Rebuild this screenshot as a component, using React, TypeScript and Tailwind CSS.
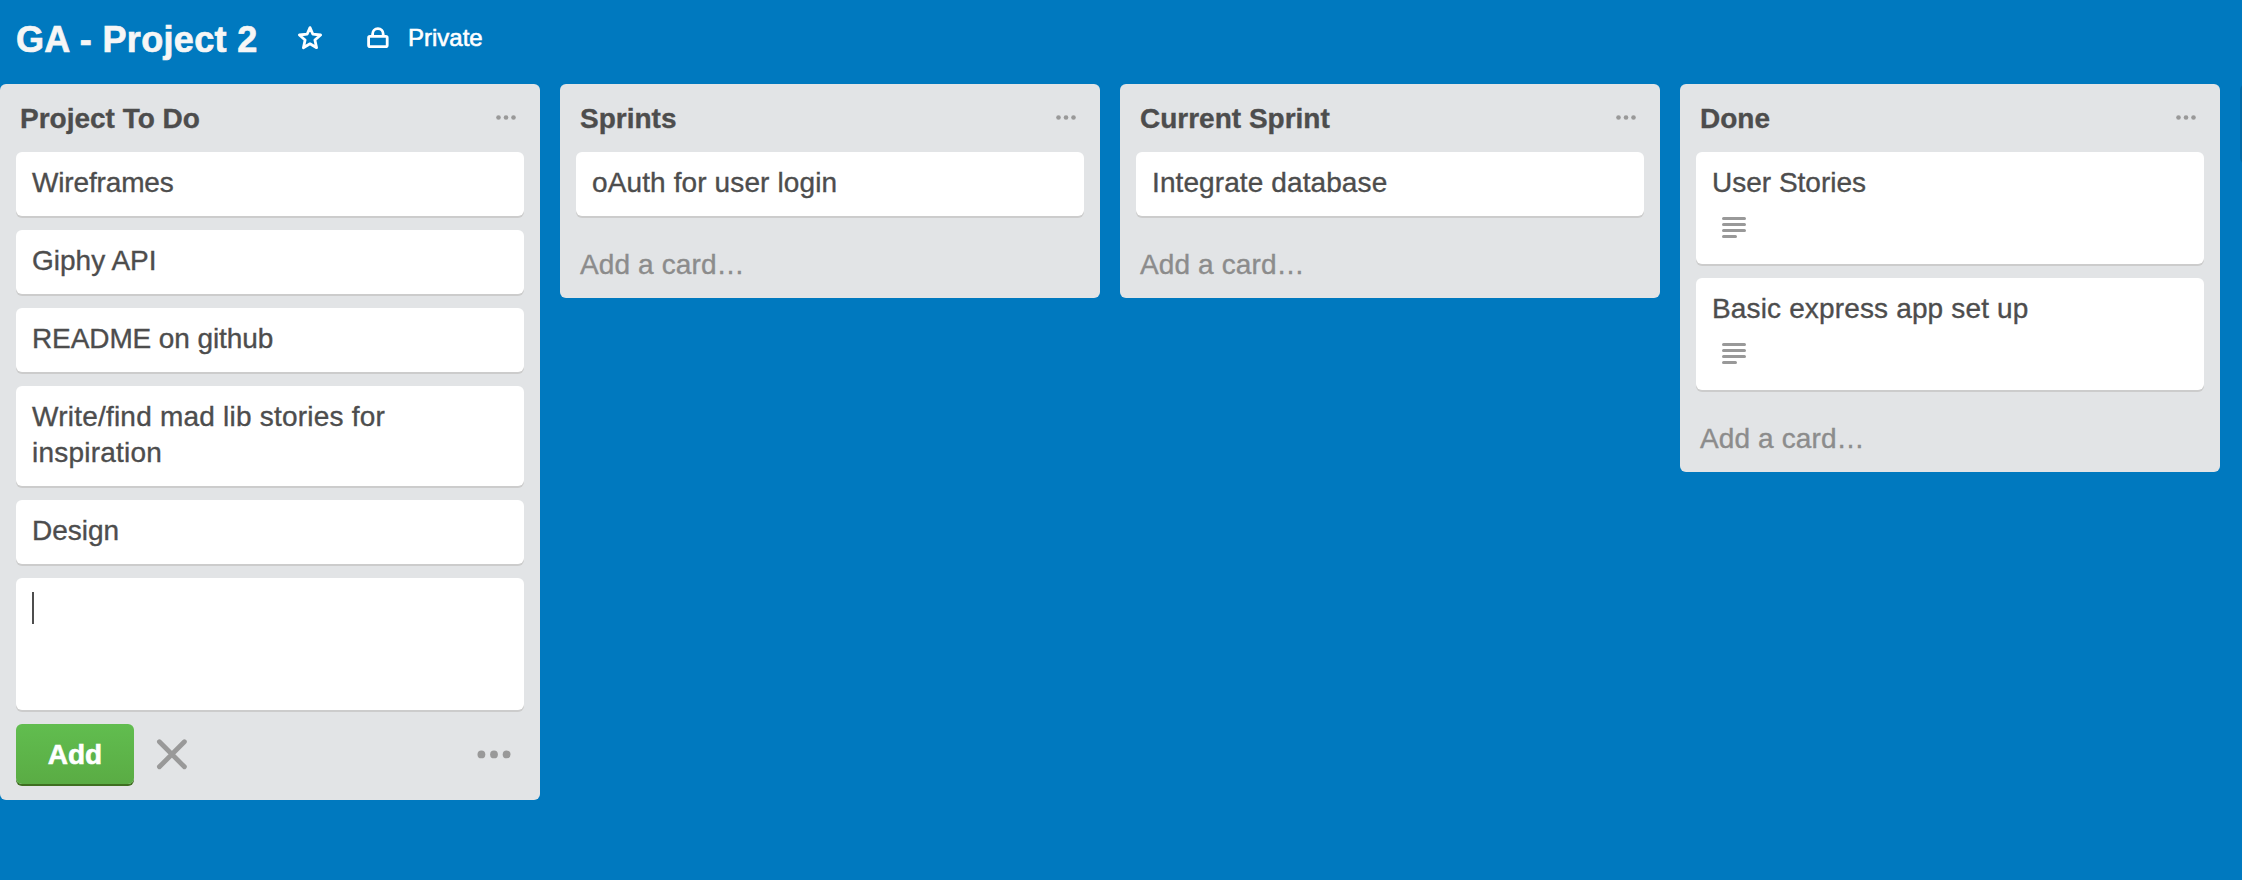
import React from "react";

type Card = { title: string; hasDescription?: boolean; tracking?: string };
type BoardList = { title: string; cards: Card[]; composing?: boolean };

const lists: BoardList[] = [
  {
    title: "Project To Do",
    composing: true,
    cards: [
      { title: "Wireframes", tracking: "tracking-[-0.15px]" },
      { title: "Giphy API" },
      { title: "README on github", tracking: "tracking-[-0.1px]" },
      { title: "Write/find mad lib stories for inspiration", tracking: "tracking-[0.22px]" },
      { title: "Design" },
    ],
  },
  { title: "Sprints", cards: [{ title: "oAuth for user login", tracking: "tracking-[0.12px]" }] },
  { title: "Current Sprint", cards: [{ title: "Integrate database", tracking: "tracking-[0.1px]" }] },
  {
    title: "Done",
    cards: [
      { title: "User Stories", hasDescription: true },
      { title: "Basic express app set up", hasDescription: true, tracking: "tracking-[0.15px]" },
    ],
  },
];

function StarIcon() {
  return (
    <svg width="28" height="28" viewBox="0 0 28 28" fill="none" stroke="white" strokeWidth="2.8" strokeLinejoin="round">
      <path d="M14 3.6 L16.9 10.2 L24.6 11 L18.9 16 L20.6 23.7 L14 19.8 L7.4 23.7 L9.1 16 L3.4 11 L11.1 10.2 Z" />
    </svg>
  );
}

function LockIcon() {
  return (
    <svg width="28" height="28" viewBox="0 0 28 28" fill="none" stroke="white" strokeWidth="2.8" strokeLinejoin="round">
      <rect x="4.6" y="12.4" width="18.6" height="10.2" rx="1.4" />
      <path d="M8.6 12.4 V10 C8.6 6.8 10.8 4.7 13.9 4.7 C17 4.7 19.2 6.8 19.2 10 V12.4" />
    </svg>
  );
}

function Dots({ large = false }: { large?: boolean }) {
  return large ? (
    <svg width="36" height="10" viewBox="0 0 36 10" fill="#999999">
      <circle cx="5.4" cy="5.4" r="3.9" />
      <circle cx="18" cy="5.4" r="3.9" />
      <circle cx="30.6" cy="5.4" r="3.9" />
    </svg>
  ) : (
    <svg width="24" height="8" viewBox="0 0 24 8" fill="#999999">
      <circle cx="4.5" cy="3.5" r="2.3" />
      <circle cx="12" cy="3.5" r="2.3" />
      <circle cx="19.5" cy="3.5" r="2.3" />
    </svg>
  );
}

function DescriptionIcon() {
  return (
    <svg width="24" height="22" viewBox="0 0 24 22" stroke="#999999" strokeWidth="3" strokeLinecap="round">
      <path d="M1.5 1.5H22.5M1.5 7.5H22.5M1.5 13.5H22.5M1.5 19.5H13.5" />
    </svg>
  );
}

function CardView({ card }: { card: Card }) {
  return (
    <article className="rounded-md bg-white px-4 pt-[13px] pb-[15px] shadow-[0_2px_0_#cccccc]">
      <p className={card.tracking}>{card.title}</p>
      {card.hasDescription && (
        <div className="flex h-12 pt-4 pl-[10px]">
          <DescriptionIcon />
        </div>
      )}
    </article>
  );
}

function Composer() {
  return (
    <div>
      <div className="h-[132px] rounded-md bg-white px-4 pt-[14px] shadow-[0_2px_0_#cccccc]">
        <div className="h-8 w-[2px] bg-[#4d4d4d]" />
      </div>
      <div className="mt-[14px] flex h-[60px] items-center">
        <button className="h-[60px] w-[118px] rounded-md bg-linear-to-b from-[#61bd4f] to-[#5aac44] pt-px text-center font-bold text-white shadow-[0_2px_0_#3f6f21] [-webkit-text-stroke:0.6px]">
          Add
        </button>
        <svg className="ml-[22px]" width="32" height="32" viewBox="0 0 32 32" stroke="#999999" strokeWidth="4.8" strokeLinecap="round">
          <path d="M3.4 3.8L28.4 28.8M28.4 3.8L3.4 28.8" />
        </svg>
        <div className="mr-3 ml-auto">
          <Dots large />
        </div>
      </div>
    </div>
  );
}

function ListView({ list }: { list: BoardList }) {
  return (
    <section className="w-[540px] shrink-0 rounded-md bg-[#e2e4e6] px-4">
      <header className="flex h-[68px] items-center pr-[6px] pl-1">
        <h2 className="pt-[2px] font-bold">{list.title}</h2>
        <div className="ml-auto">
          <Dots />
        </div>
      </header>
      <div className="flex flex-col gap-[14px]">
        {list.cards.map((card) => (
          <CardView key={card.title} card={card} />
        ))}
        {list.composing && <Composer />}
      </div>
      {list.composing ? (
        <div className="h-4" />
      ) : (
        <div className="h-[82px] pt-[31px] pl-1 tracking-[0.12px] text-[#8c8c8c]">Add a card…</div>
      )}
    </section>
  );
}

export default function App() {
  return (
    <main className="h-[880px] w-full overflow-hidden bg-[#0079bf] font-['Liberation_Sans',Arial,sans-serif] text-[28px] leading-9 text-[#4d4d4d] [-webkit-text-stroke:0.35px]">
      <header className="flex h-[84px] items-start pl-4 text-white">
        <h1 className="mt-5 w-[280px] text-4xl leading-10 font-bold tracking-[0.35px] whitespace-nowrap text-[#f6f6f6] [-webkit-text-stroke:0.7px]">
          GA - Project 2
        </h1>
        <div className="mt-6">
          <StarIcon />
        </div>
        <div className="mt-6 ml-10">
          <LockIcon />
        </div>
        <span className="mt-[22px] ml-4 text-2xl leading-8 [-webkit-text-stroke:0.6px]">Private</span>
      </header>
      <div className="flex items-start gap-5">
        {lists.map((list) => (
          <ListView key={list.title} list={list} />
        ))}
        <div className="h-20 w-[540px] shrink-0 rounded-md bg-[#006aa8]" />
      </div>
    </main>
  );
}
